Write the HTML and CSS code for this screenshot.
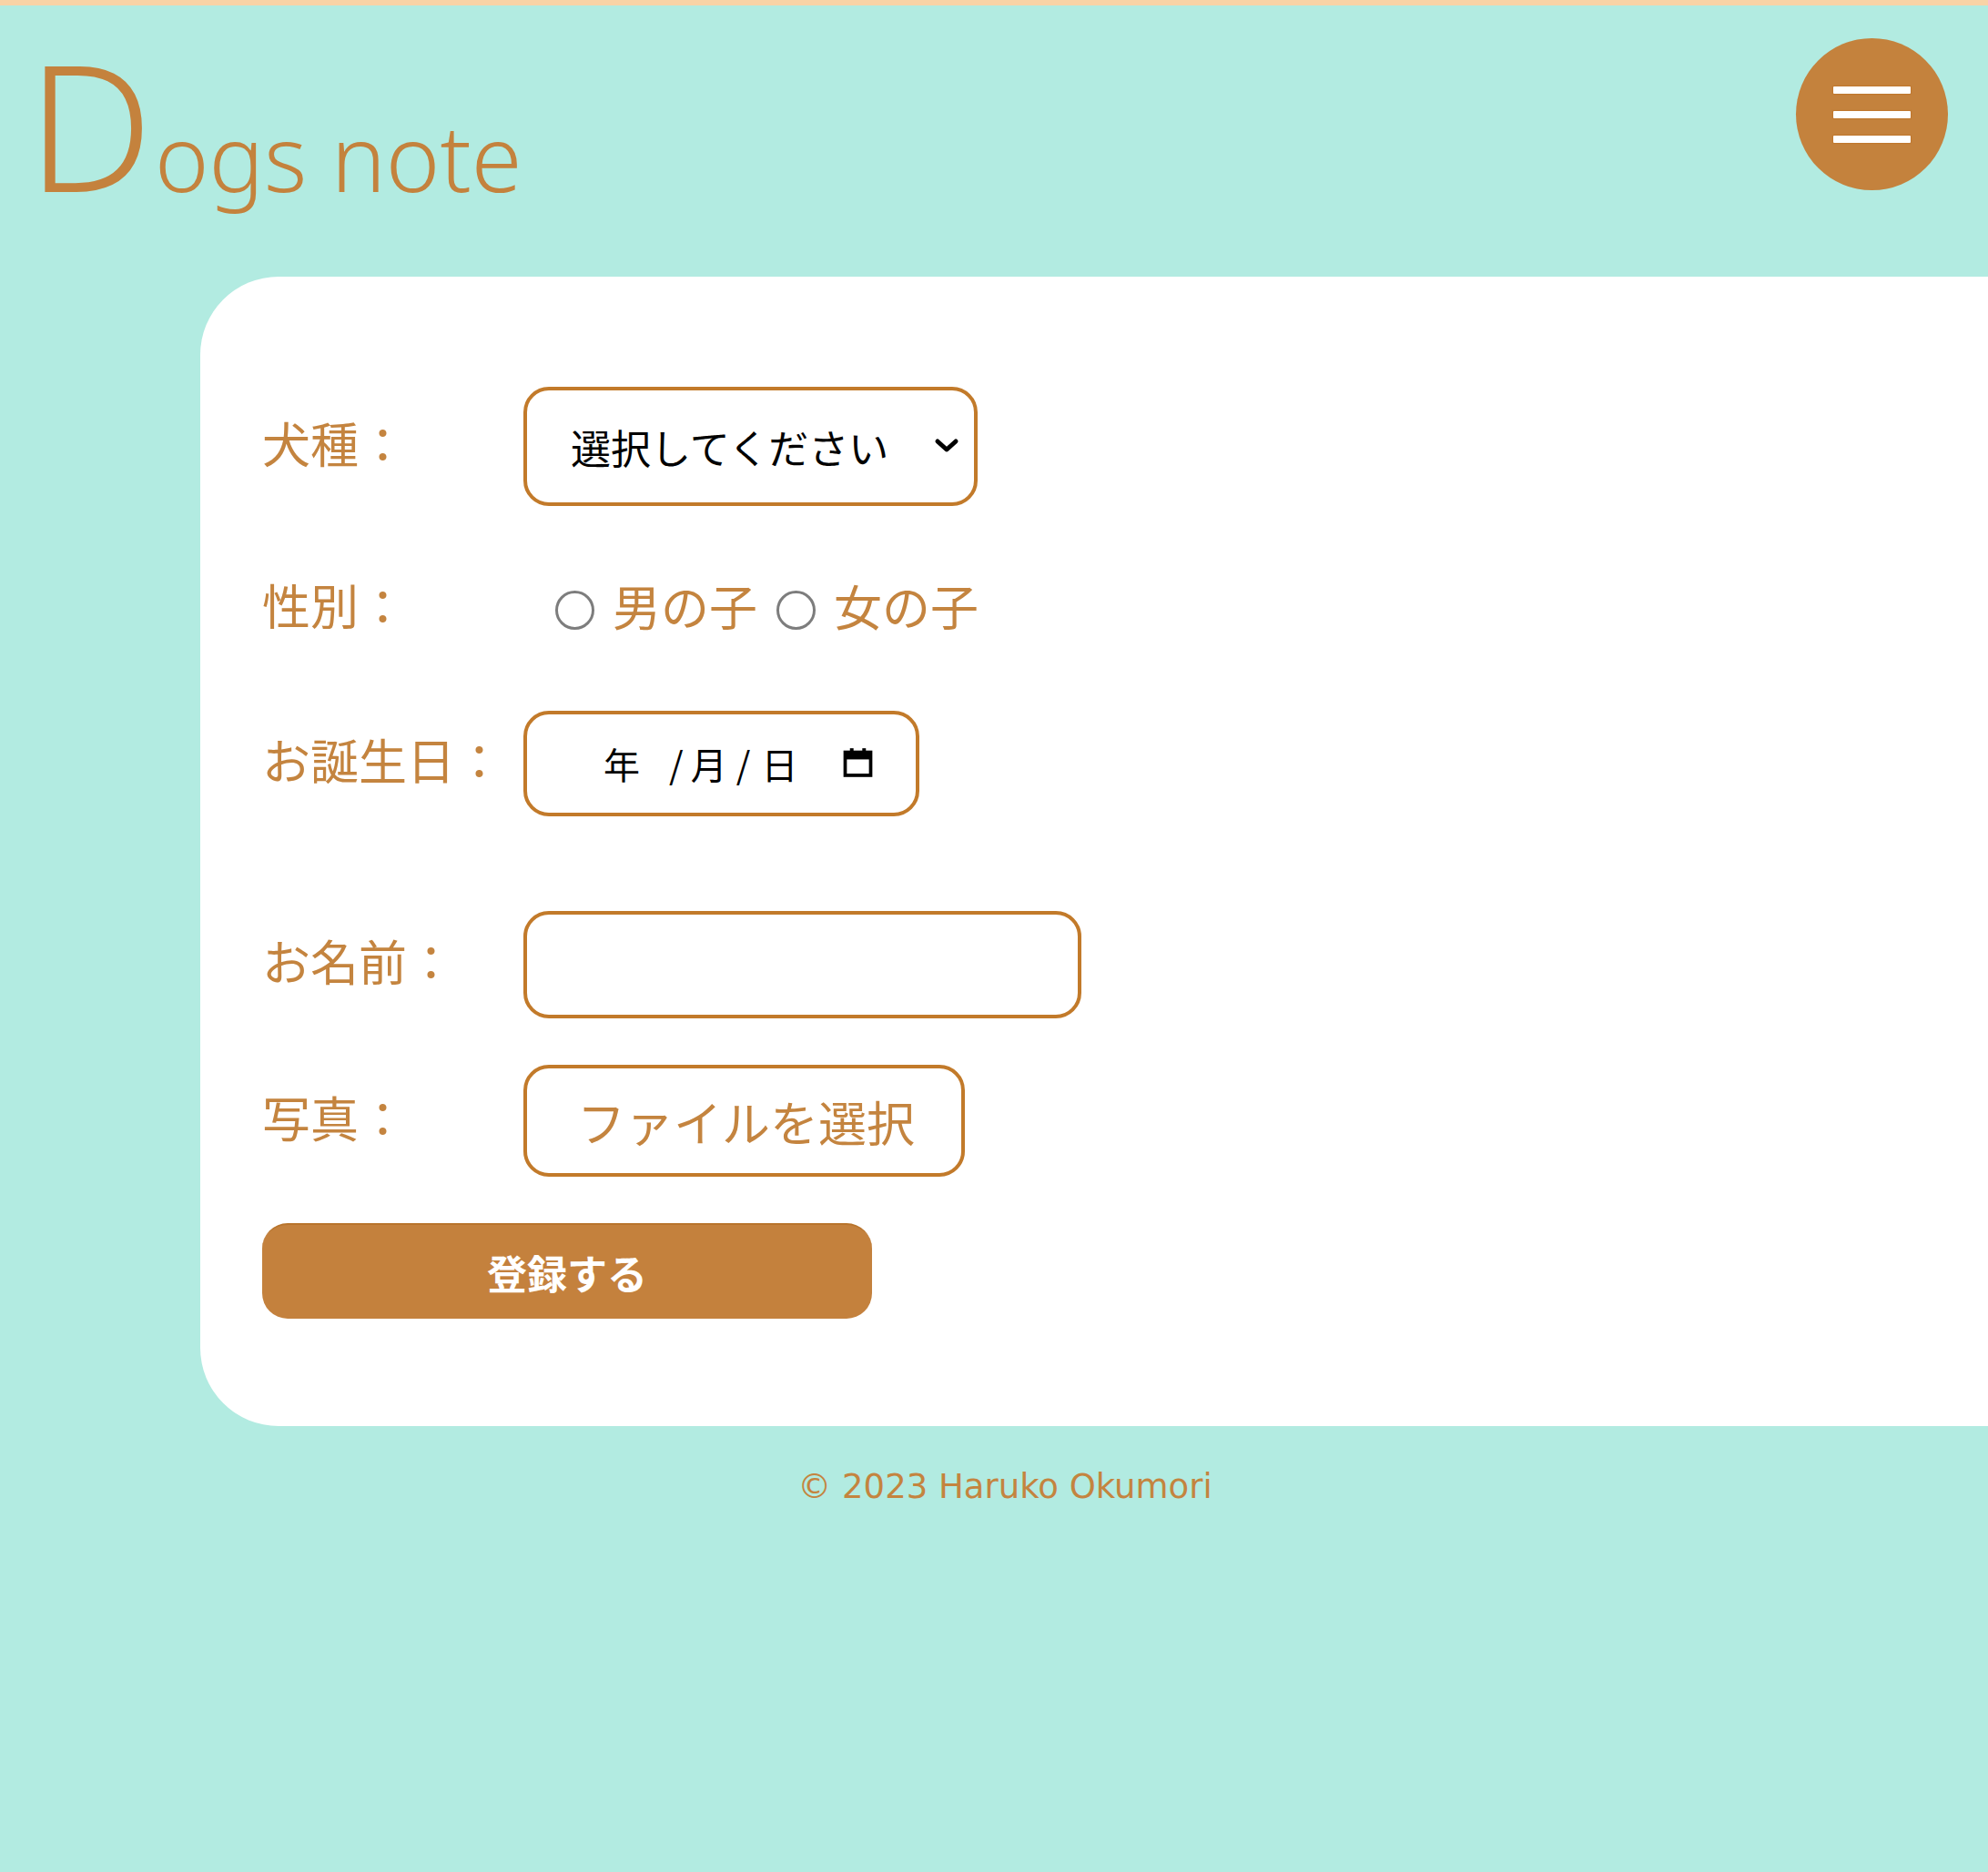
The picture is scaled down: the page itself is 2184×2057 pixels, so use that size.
FILE: index.html
```html
<!DOCTYPE html>
<html lang="ja">
<head>
  <meta charset="UTF-8" />
  <title>Dogs note</title>
  <meta name="viewport" content="width=device-width, initial-scale=1.0" />
  <link rel="stylesheet" href="styles.css">
</head>
<body>
  <header class="header">
    <h1 class="logo"><span class="logo-big">D</span>ogs note</h1>
    <button class="menu-btn" aria-label="メニュー">
      <span></span>
      <span></span>
      <span></span>
    </button>
  </header>

  <main class="card">
    <form class="dog-form">
      <div class="row row-breed">
        <label class="label" for="breed">犬種：</label>
        <span class="select-wrap">
          <select id="breed" class="select">
            <option>選択してください</option>
            <option>柴犬</option>
            <option>トイプードル</option>
            <option>チワワ</option>
          </select>
          <svg class="chevron" viewBox="0 0 28 18" width="28" height="18">
            <path d="M4 4 L14 13 L24 4" fill="none" stroke="#000" stroke-width="5" stroke-linecap="round" stroke-linejoin="round"/>
          </svg>
        </span>
      </div>

      <div class="row row-sex">
        <span class="label">性別：</span>
        <div class="radios">
          <label class="radio"><input type="radio" name="sex" value="male"><span>男の子</span></label>
          <label class="radio"><input type="radio" name="sex" value="female"><span>女の子</span></label>
        </div>
      </div>

      <div class="row row-birth">
        <label class="label" for="birth">お誕生日：</label>
        <div class="date-box" id="birth">
          <span class="date-text">
            <span class="d-year">年</span>
            <span class="d-sep1">/</span>
            <span class="d-month">月</span>
            <span class="d-sep2">/</span>
            <span>日</span>
          </span>
          <svg class="calendar" viewBox="0 0 16 16" width="35" height="35">
            <rect x="1.6" y="3" width="12.8" height="11.6" fill="none" stroke="#000" stroke-width="1.7"/>
            <rect x="1.6" y="3" width="12.8" height="3.6" fill="#000"/>
            <rect x="4" y="1" width="1.8" height="3" fill="#000"/>
            <rect x="10.2" y="1" width="1.8" height="3" fill="#000"/>
          </svg>
        </div>
      </div>

      <div class="row row-name">
        <label class="label" for="name">お名前：</label>
        <input type="text" id="name" class="text-input">
      </div>

      <div class="row row-photo">
        <span class="label">写真：</span>
        <label class="file-btn">
          <input type="file" accept="image/*">
          ファイルを選択
        </label>
      </div>

      <button type="submit" class="submit">登録する</button>
    </form>
  </main>

  <footer class="footer">© 2023 Haruko Okumori</footer>
</body>
</html>
```

FILE: styles.css
```css
* { box-sizing: border-box; margin: 0; padding: 0; }

html {
  background: #b2ebe1;
}

body {
  font-family: "Noto Sans CJK JP", "Noto Sans", sans-serif;
  background: #b2ebe1;
  color: #c4823d;
  border-top: 6px solid #f8d3a6;
  min-height: 100vh;
  overflow-x: hidden;
}

/* header */
.header {
  height: 298px;
  display: flex;
  justify-content: space-between;
  align-items: flex-start;
  padding: 0 44px 0 30px;
}

.logo {
  font-family: "Noto Sans", sans-serif;
  font-weight: 360;
  font-size: 101px;
  line-height: 1;
  color: #c4823d;
  padding-top: 33px;
  letter-spacing: 0;
}

.logo-big {
  font-size: 194px;
  line-height: 1;
  margin-right: 2px;
}

.menu-btn {
  width: 167px;
  height: 167px;
  margin-top: 36px;
  border-radius: 50%;
  border: none;
  background: #c4823d;
  display: flex;
  flex-direction: column;
  justify-content: center;
  align-items: center;
  gap: 19px;
  cursor: pointer;
}

.menu-btn span {
  display: block;
  width: 85px;
  height: 8px;
  background: #fff;
  border-radius: 1px;
  box-shadow: 0 0 1px 1px rgba(190, 110, 30, 0.5);
}

/* card */
.card {
  background: #fff;
  margin-left: 220px;
  margin-right: -120px;
  border-radius: 86px;
  padding: 121px 68px 118px;
}

.row {
  display: flex;
  align-items: center;
}

.row-breed { margin-bottom: 83px; }
.row-sex { margin-bottom: 82px; height: 60px; }
.row-birth { margin-bottom: 104px; }
.row-name { margin-bottom: 51px; }
.row-photo { margin-bottom: 51px; }

.label {
  width: 287px;
  font-size: 53px;
  line-height: 1.2;
  color: #c4843f;
  flex-shrink: 0;
  margin-top: -8px;
}

.select-wrap {
  position: relative;
  display: inline-block;
}

.select {
  appearance: none;
  -webkit-appearance: none;
  width: 499px;
  height: 131px;
  border: 4px solid #c27a2a;
  border-radius: 28px;
  background: #fff;
  font-family: "Noto Sans CJK JP", sans-serif;
  font-size: 44px;
  color: #000;
  padding: 0 70px 0 48px;
  outline: none;
}

.chevron {
  position: absolute;
  right: 20px;
  top: 56px;
  pointer-events: none;
}

.radios {
  display: flex;
  align-items: center;
  padding-left: 35px;
  margin-top: -6px;
}

.radio {
  display: flex;
  align-items: center;
  font-size: 53px;
  line-height: 1.2;
  color: #c4843f;
  margin-right: 21px;
}

.radio input {
  appearance: none;
  -webkit-appearance: none;
  width: 43px;
  height: 43px;
  border: 3px solid #7d7d7d;
  border-radius: 50%;
  background: #fff;
  margin-right: 20px;
  margin-top: 8px;
}

.radio input:checked {
  background: radial-gradient(#c4823d 45%, #fff 50%);
}

.date-box {
  width: 435px;
  height: 116px;
  border: 4px solid #c27a2a;
  border-radius: 28px;
  background: #fff;
  display: flex;
  align-items: center;
  padding-left: 84px;
  color: #000;
}

.date-text {
  display: flex;
  align-items: center;
  font-size: 40px;
  line-height: 1;
  width: 262px;
}

.d-year { margin-right: 32px; }
.d-sep1 { margin-right: 8px; }
.d-month { margin-right: 10px; }
.d-sep2 { margin-right: 12px; }

.calendar {
  margin-top: -4px;
}

.text-input {
  width: 613px;
  height: 118px;
  border: 4px solid #c27a2a;
  border-radius: 28px;
  background: #fff;
  font-size: 44px;
  padding: 0 30px;
  outline: none;
}

.file-btn {
  width: 485px;
  height: 123px;
  border: 4px solid #c27a2a;
  border-radius: 28px;
  background: #fff;
  display: flex;
  align-items: center;
  padding-left: 55px;
  font-size: 53px;
  color: #c4843f;
  cursor: pointer;
}

.file-btn input {
  display: none;
}

.submit {
  display: block;
  width: 670px;
  height: 105px;
  border: none;
  border-top: 2px solid #b8742c;
  border-radius: 28px;
  background: #c4813d;
  color: #fff;
  font-family: "Noto Sans CJK JP", sans-serif;
  font-weight: bold;
  font-size: 44px;
  cursor: pointer;
}

.footer {
  font-family: "DejaVu Sans", Verdana, sans-serif;
  font-size: 37px;
  color: #c4843f;
  text-align: center;
  padding: 45px 0 0 24px;
}
```
